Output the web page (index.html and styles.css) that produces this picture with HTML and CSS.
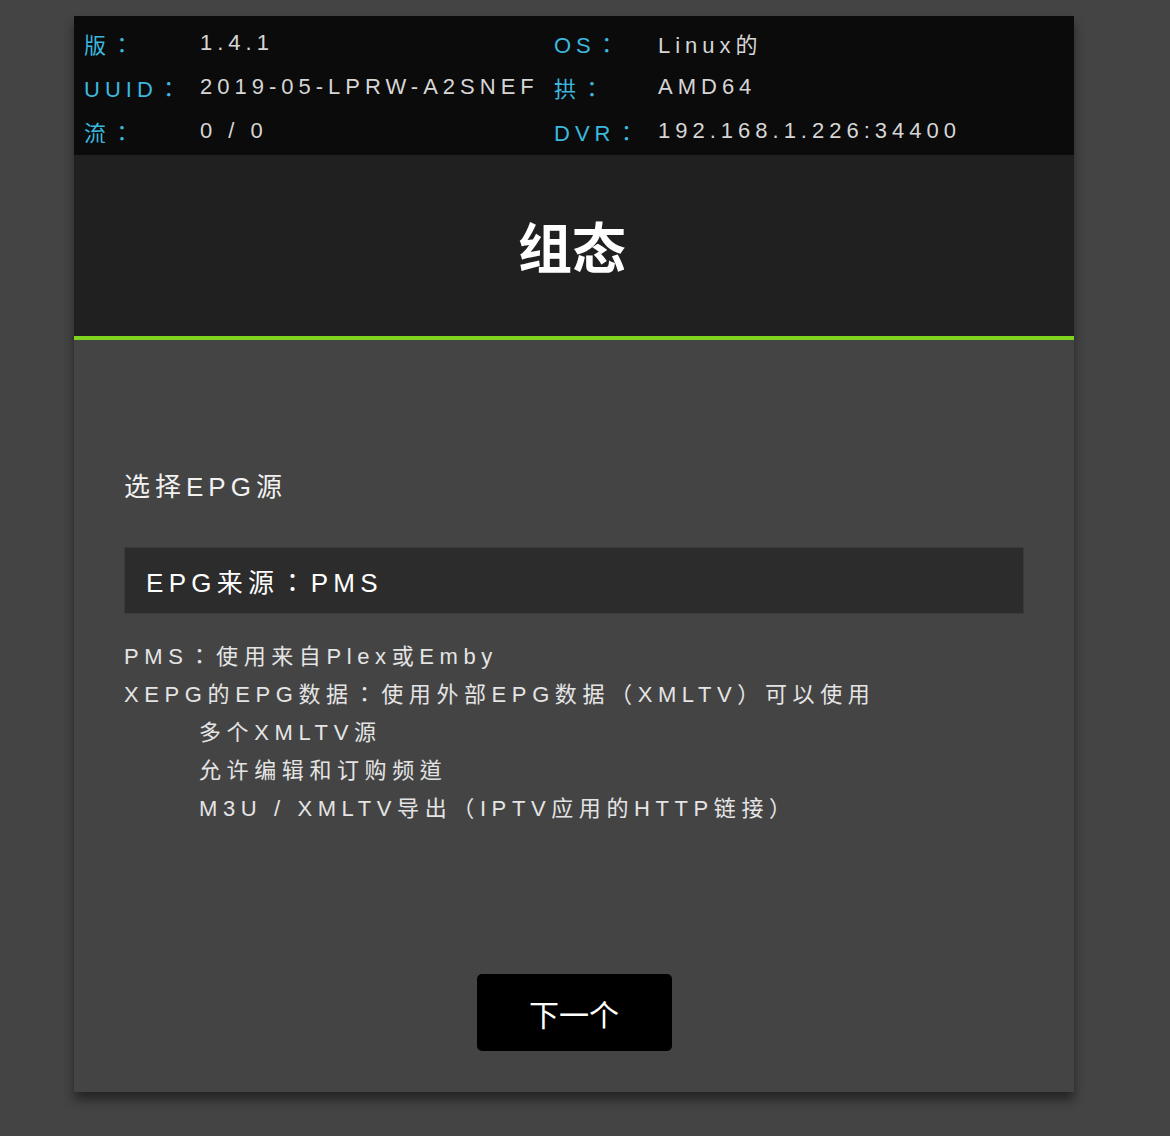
FILE: index.html
```html
<!DOCTYPE html>
<html lang="zh-TW">
<head>
  <meta charset="UTF-8">
  <meta name="viewport" content="width=device-width, initial-scale=1.0">
  <title>组态</title>
  <link rel="stylesheet" href="styles.css">
</head>
<body>
  <div class="wizard">

    <div class="info-bar">
      <div class="info-col first">
        <div class="info-row"><span class="info-label">版：</span><span class="info-value">1.4.1</span></div>
        <div class="info-row"><span class="info-label">UUID：</span><span class="info-value">2019-05-LPRW-A2SNEF</span></div>
        <div class="info-row"><span class="info-label">流：</span><span class="info-value">0 / 0</span></div>
      </div>
      <div class="info-col second">
        <div class="info-row"><span class="info-label">OS：</span><span class="info-value">Linux的</span></div>
        <div class="info-row"><span class="info-label">拱：</span><span class="info-value">AMD64</span></div>
        <div class="info-row"><span class="info-label">DVR：</span><span class="info-value">192.168.1.226:34400</span></div>
      </div>
    </div>

    <div class="title-bar">
      <h1>组态</h1>
    </div>

    <div class="content">
      <div class="section-label">选择EPG源</div>

      <div class="select-box">EPG来源：PMS</div>

      <div class="description">
        <div>PMS：使用来自Plex或Emby</div>
        <div>XEPG的EPG数据：使用外部EPG数据（XMLTV）可以使用</div>
        <div class="indent">多个XMLTV源</div>
        <div class="indent">允许编辑和订购频道</div>
        <div class="indent">M3U / XMLTV导出（IPTV应用的HTTP链接）</div>
      </div>

      <div class="actions">
        <button class="next-button">下一个</button>
      </div>
    </div>

  </div>
</body>
</html>
```

FILE: styles.css
```css
body, html {
  margin: 0;
  padding: 0;
  background-color: #444444;
  font-family: 'Liberation Sans', Arial, 'Noto Sans CJK TC', sans-serif;
}

body {
  padding: 16px 0 44px 74px;
}

.wizard {
  width: 1000px;
  background-color: #444444;
  box-shadow: 0 8px 10px rgba(0, 0, 0, 0.45);
}

/* info bar */
.info-bar {
  display: flex;
  background-color: #0b0b0b;
  padding: 5px 10px 2px 10px;
}

.info-col.first {
  width: 470px;
}

.info-row {
  display: flex;
  align-items: center;
  height: 44px;
  font-size: 22px;
  letter-spacing: 5px;
}

.info-label {
  color: #3cb8df;
}

.first .info-label {
  width: 116px;
}

.second .info-label {
  width: 104px;
}

.info-value {
  color: #d6d6d6;
  white-space: nowrap;
}

/* title */
.title-bar {
  height: 181px;
  display: flex;
  align-items: center;
  justify-content: center;
  background-color: #202020;
  border-bottom: 4px solid #7fd420;
}

.title-bar h1 {
  margin: 0 4px 0 0;
  color: #ffffff;
  font-size: 54px;
  font-weight: bold;
  font-family: 'Noto Sans CJK SC', sans-serif;
}

/* content */
.content {
  padding: 129px 50px 41px 50px;
  color: #f2f2f2;
}

.section-label {
  font-size: 26px;
  line-height: 36px;
  letter-spacing: 5px;
}

.select-box {
  margin-top: 42px;
  height: 67px;
  display: flex;
  align-items: center;
  padding-left: 21px;
  background-color: #2c2c2c;
  border: 1px solid #3a3a3a;
  box-sizing: border-box;
  font-size: 26px;
  letter-spacing: 5.3px;
  color: #ffffff;
}

.description {
  margin-top: 24px;
  font-size: 22px;
  line-height: 38px;
  letter-spacing: 5.6px;
  color: #e4e4e4;
}

.description .indent {
  padding-left: 75px;
}

.actions {
  margin-top: 146px;
  display: flex;
  justify-content: center;
}

.next-button {
  width: 195px;
  height: 77px;
  background-color: #000000;
  color: #ffffff;
  border: none;
  border-radius: 5px;
  font-size: 30px;
  font-family: 'Noto Sans CJK SC', sans-serif;
  cursor: pointer;
}
```
